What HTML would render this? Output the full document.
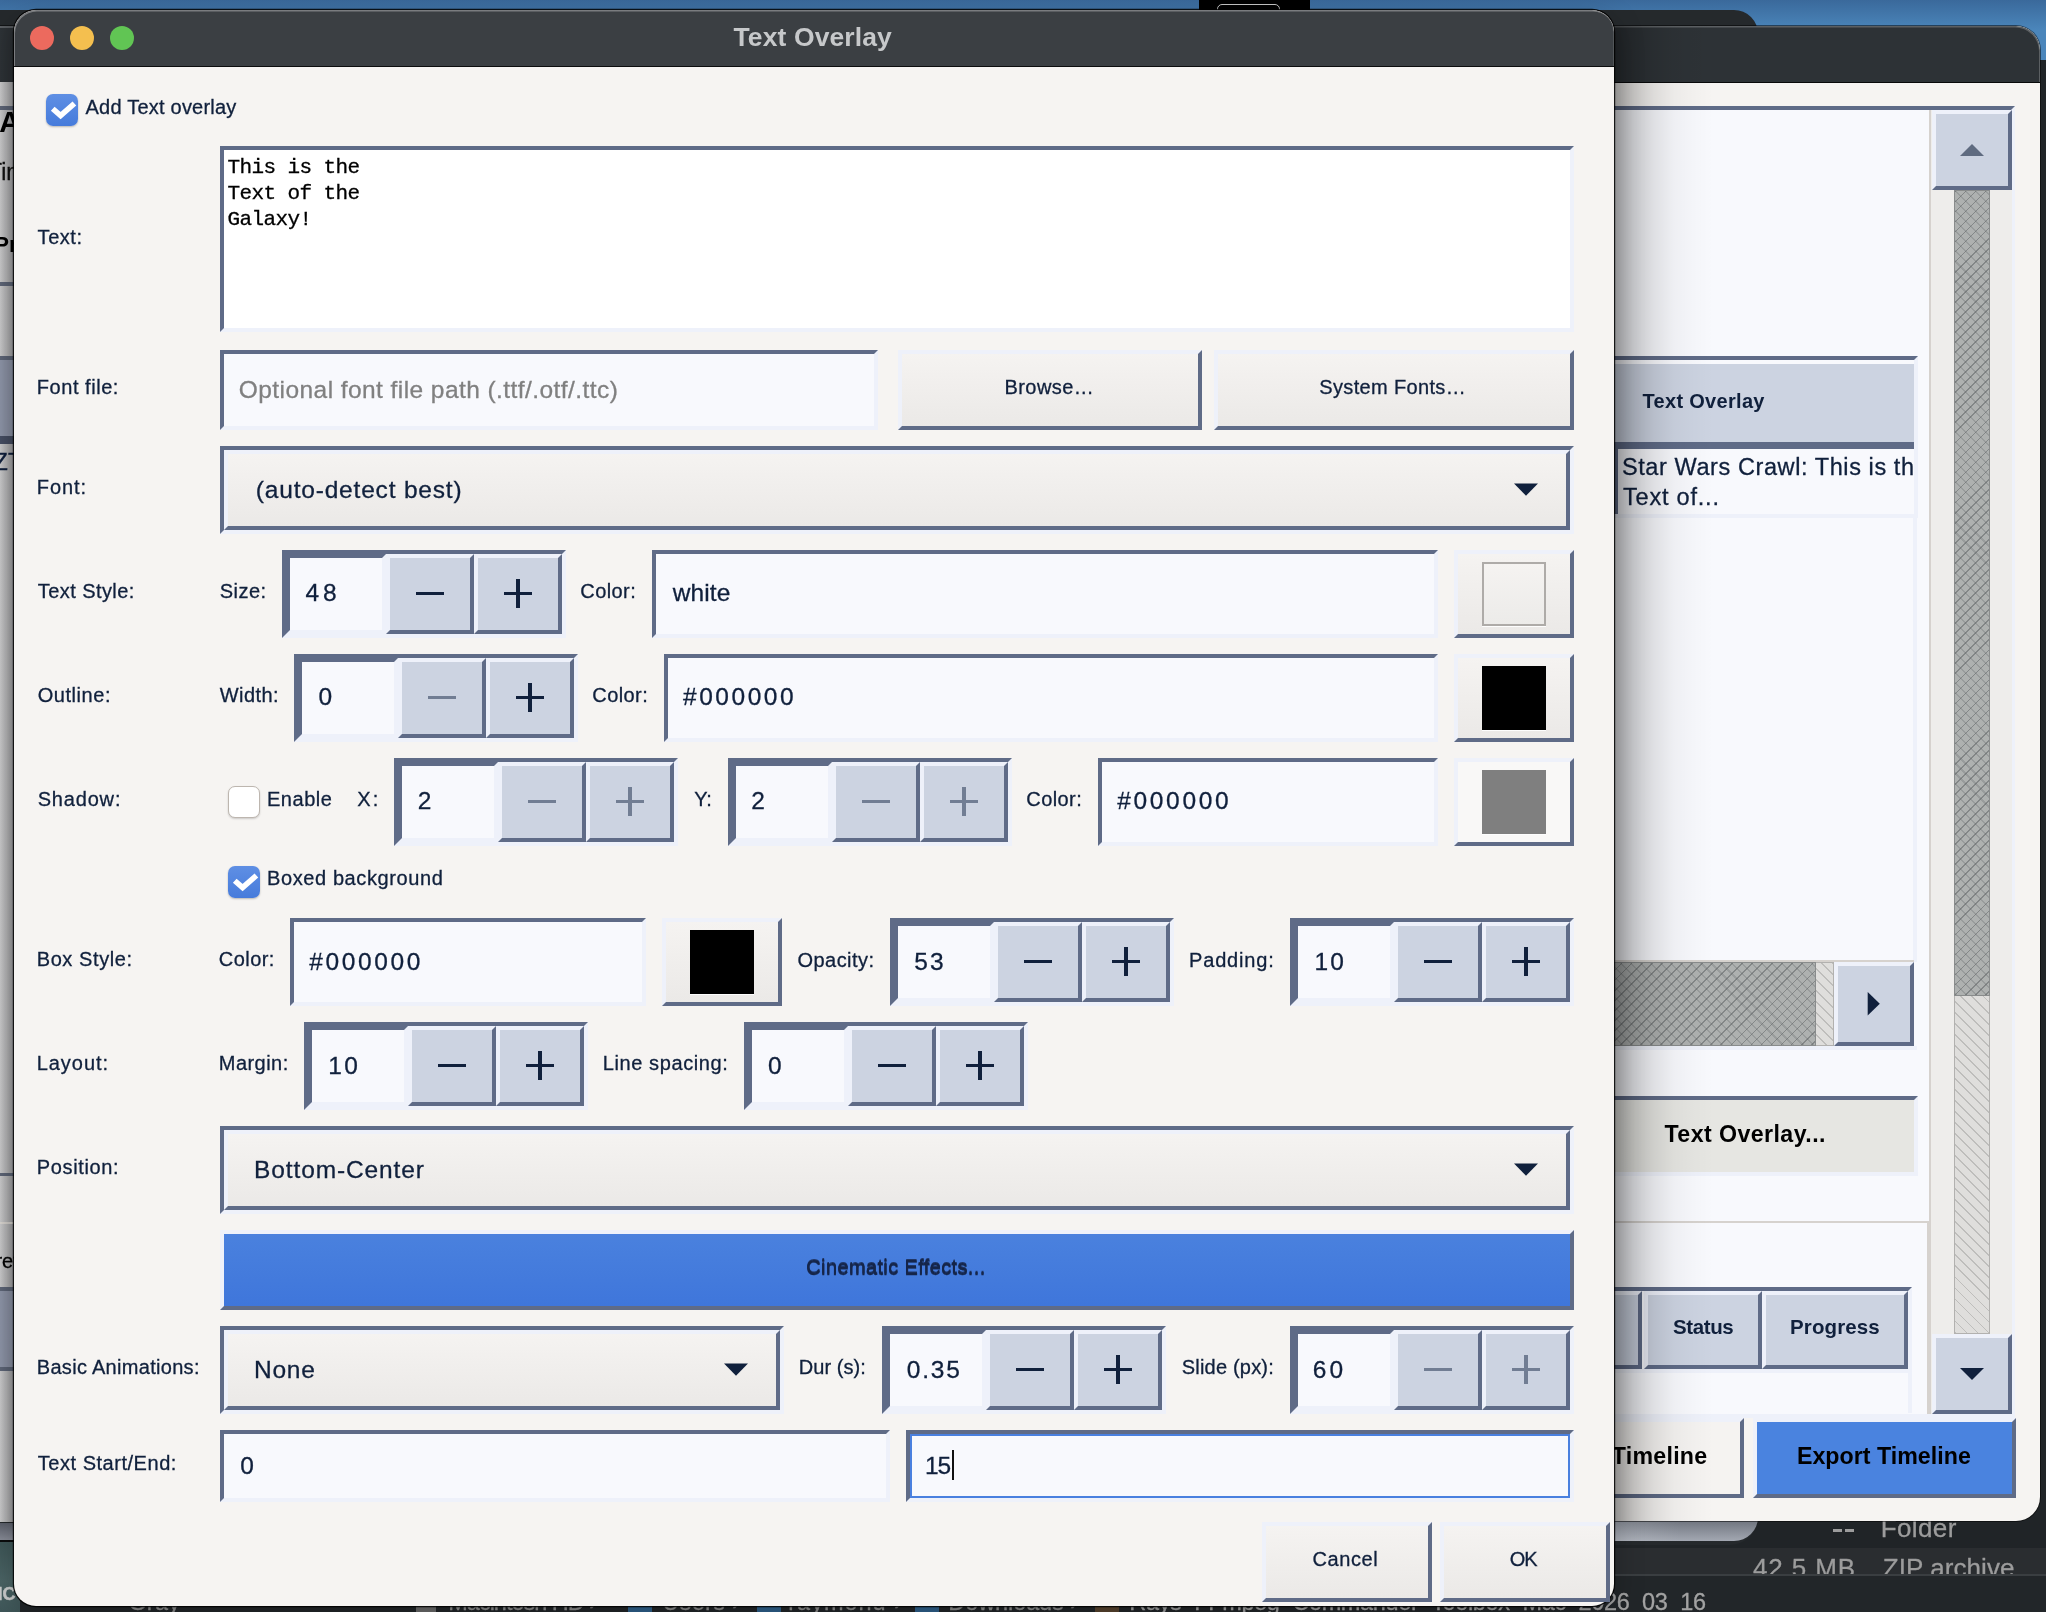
<!DOCTYPE html>
<html><head><meta charset="utf-8"><title>Text Overlay</title>
<style>
html,body{margin:0;padding:0;}
body{width:2046px;height:1612px;overflow:hidden;position:relative;background:#202427;font-family:"Liberation Sans",sans-serif;color:#10203c;}
.a,.t,.sunk,.rais{position:absolute;box-sizing:border-box;}
.t{white-space:nowrap;-webkit-text-stroke:0.3px currentColor;}
.sunk{border:4px solid;border-color:#5f6b87 #eef1fa #eef1fa #5f6b87;}
.rais{border:4px solid;border-color:#eef1fa #5f6b87 #5f6b87 #eef1fa;}
.mono{font-family:"Liberation Mono",monospace;}
#root{position:absolute;left:0;top:0;width:2046px;height:1612px;overflow:hidden;will-change:transform;}
</style></head><body><div id="root">
<div class="a" style="left:0;top:0;width:2046px;height:1612px;background:#202427"></div>
<div class="a" style="left:0;top:0;width:2046px;height:60px;background:linear-gradient(#3a699b,#4b86bb 50%,#4b86bb)"></div>
<div class="a" style="left:1199px;top:0;width:111px;height:10px;background:#000"></div>
<div class="a" style="left:1217px;top:4px;width:63px;height:12px;border:1.5px solid #c4c4c4;border-radius:5px"></div>
<div class="a" style="left:-40px;top:10px;width:1798px;height:1535px;background:#25292c;border-radius:24px 24px 28px 28px"></div>
<div class="a" style="left:1614px;top:1548px;width:432px;height:26px;background:#2a2d30;"></div>
<div class="a" style="left:1833px;top:1529px;width:9px;height:2.5px;background:#9c9c9c;"></div>
<div class="a" style="left:1845px;top:1529px;width:9px;height:2.5px;background:#9c9c9c;"></div>
<div class="t" style="left:1880.7px;top:1513.49px;font-size:26px;line-height:31px;color:#9c9c9c;letter-spacing:0.392px;">Folder</div>
<div class="t" style="left:1753.0px;top:1553.49px;font-size:26px;line-height:31px;color:#9c9c9c;letter-spacing:0.886px;">42.5 MB</div>
<div class="t" style="left:1882.7px;top:1553.49px;font-size:26px;line-height:31px;color:#9c9c9c;letter-spacing:0.077px;">ZIP archive</div>
<div class="a" style="left:0px;top:1574px;width:2046px;height:38px;background:#222629;"></div>
<div class="a" style="left:1614px;top:1574px;width:432px;height:1.5px;background:#3a3e41;"></div>
<div class="a" style="left:1500px;top:1500px;width:258px;height:40.5px;background:linear-gradient(90deg,rgba(255,255,255,.35),rgba(255,255,255,0) 70%),linear-gradient(#6f747e 50%,#a3a8b2);border-radius:0 0 24px 0"></div>
<div class="a" style="left:-60px;top:26px;width:2100px;height:1495px;background:#f6f4f2;border-radius:24px;overflow:hidden;box-shadow:0 0 0 1px rgba(0,0,0,.5)"><div class="a" style="left:0;top:0;width:2100px;height:57px;background:#2d3236;border-bottom:1px solid #08090a;border-radius:24px 24px 0 0;box-shadow:inset -1px 1.5px 0 0 rgba(255,255,255,.22)"></div></div>
<div class="sunk" style="left:1560px;top:106px;width:455px;height:1312px;background:#f8f9fd;"></div>
<div class="a" style="left:1929px;top:110px;width:2px;height:1304px;background:#d6d2ce;"></div>
<div class="a" style="left:1931px;top:110px;width:81px;height:1304px;background:#eeedeb;"></div>
<div class="rais" style="left:1932px;top:110px;width:80px;height:80px;background:#ccd3e1;"></div>
<svg class="a" style="left:1959px;top:142.8px" width="26" height="14" viewBox="0 0 26 14"><path d="M1 13 L13 1 L25 13 Z" fill="#5f6b80"/></svg>
<div class="rais" style="left:1932px;top:1334px;width:80px;height:80px;background:#ccd3e1;"></div>
<svg class="a" style="left:1959px;top:1367px" width="26" height="14" viewBox="0 0 26 14"><path d="M1 1 L25 1 L13 13 Z" fill="#10203c"/></svg>
<div class="a" style="left:1954px;top:190px;width:36px;height:1144px;background:repeating-linear-gradient(45deg,rgba(150,150,148,.45) 0 1.3px,transparent 1.3px 7.8px),#dfdedc;border:1.5px solid #b2b1af;"></div>
<div class="a" style="left:1954px;top:190px;width:36px;height:806px;background:repeating-linear-gradient(135deg,rgba(90,94,96,.5) 0 1.2px,transparent 1.2px 7.1px),repeating-linear-gradient(45deg,rgba(110,114,116,.33) 0 1.5px,transparent 1.5px 7.1px),#aeb1b0;border:1.5px solid #898c8c;"></div>
<div class="sunk" style="left:1560px;top:356px;width:358px;height:162px;background:#f8f9fd;"></div>
<div class="a" style="left:1564px;top:364px;width:350px;height:78px;background:#ccd3e1;"></div>
<div class="a" style="left:1564px;top:442px;width:350px;height:7px;background:#5f6b87;"></div>
<div class="t" style="left:1642.5px;top:389.27px;font-size:20px;line-height:24px;font-weight:bold;-webkit-text-stroke:0;letter-spacing:0.304px;">Text Overlay</div>
<div class="t" style="left:1622.0px;top:453.26px;font-size:23.5px;line-height:28px;letter-spacing:0.585px;">Star Wars Crawl: This is th</div>
<div class="t" style="left:1623.0px;top:482.96px;font-size:23.5px;line-height:28px;letter-spacing:0.791px;">Text of...</div>
<div class="a" style="left:1560px;top:518px;width:357px;height:444px;border-right:4px solid #eef1fa;"></div>
<div class="a" style="left:1560px;top:960px;width:354px;height:2px;background:#d6d2ce;"></div>
<div class="a" style="left:1560px;top:962px;width:274px;height:84px;background:repeating-linear-gradient(45deg,rgba(150,150,148,.45) 0 1.3px,transparent 1.3px 7.8px),#dfdedc;border:1.5px solid #b2b1af;"></div>
<div class="a" style="left:1560px;top:962px;width:256px;height:84px;background:repeating-linear-gradient(135deg,rgba(90,94,96,.5) 0 1.2px,transparent 1.2px 7.1px),repeating-linear-gradient(45deg,rgba(110,114,116,.33) 0 1.5px,transparent 1.5px 7.1px),#aeb1b0;border:1.5px solid #898c8c;"></div>
<div class="rais" style="left:1834px;top:962px;width:80px;height:84px;background:#ccd3e1;"></div>
<svg class="a" style="left:1866px;top:990px" width="16" height="28" viewBox="0 0 16 28"><path d="M1.7 2 L13.8 13.7 L1.7 25.4 Z" fill="#10203c"/></svg>
<div class="a" style="left:1560px;top:1046px;width:357px;height:4px;background:#eef1fa;"></div>
<div class="a" style="left:1614px;top:442px;width:4px;height:72px;background:#5f6b87;"></div>
<div class="sunk" style="left:1560px;top:1096px;width:358px;height:80px;background:#e6e6e2;"></div>
<div class="t" style="left:1664.5px;top:1120.26px;font-size:23.2px;line-height:28px;font-weight:bold;-webkit-text-stroke:0;color:#000;letter-spacing:0.418px;">Text Overlay...</div>
<div class="a" style="left:1560px;top:1221px;width:370px;height:2px;background:#d6d2ce;"></div>
<div class="a" style="left:1927px;top:1222px;width:3px;height:192px;background:#d6d2ce;"></div>
<div class="sunk" style="left:1560px;top:1287px;width:352px;height:86px;background:#f8f9fd;"></div>
<div class="rais" style="left:1560px;top:1291px;width:82px;height:78px;background:#ccd3e1;"></div>
<div class="rais" style="left:1644px;top:1291px;width:118px;height:78px;background:#ccd3e1;"></div>
<div class="t" style="left:1644px;width:118px;text-align:center;top:1318.07px;font-size:20px;line-height:24px;"></div>
<div class="t" style="left:1673.1px;top:1314.40px;font-size:20.5px;line-height:25px;font-weight:bold;-webkit-text-stroke:0;letter-spacing:-0.41px;">Status</div>
<div class="rais" style="left:1762px;top:1291px;width:146px;height:78px;background:#ccd3e1;"></div>
<div class="t" style="left:1762px;width:146px;text-align:center;top:1318.07px;font-size:20px;line-height:24px;"></div>
<div class="t" style="left:1790.1px;top:1314.40px;font-size:20.5px;line-height:25px;font-weight:bold;-webkit-text-stroke:0;letter-spacing:0.089px;">Progress</div>
<div class="a" style="left:1560px;top:1373px;width:352px;height:40px;border-right:4px solid #eef1fa;"></div>
<div class="rais" style="left:1560px;top:1418px;width:184px;height:80px;background:#f5f3f1;"></div>
<div class="t" style="left:1560px;width:184px;text-align:center;top:1446.07px;font-size:20px;line-height:24px;"></div>
<div class="t" style="right:338.6px;top:1442.3px;font-size:23.2px;line-height:28px;font-weight:bold;-webkit-text-stroke:0;color:#000;letter-spacing:0.25px">Timeline</div>
<div class="rais" style="left:1753px;top:1418px;width:263px;height:80px;background:#4a83df;"></div>
<div class="t" style="left:1753px;width:263px;text-align:center;top:1446.07px;font-size:20px;line-height:24px;"></div>
<div class="t" style="left:1796.9px;top:1441.96px;font-size:23.2px;line-height:28px;font-weight:bold;-webkit-text-stroke:0;color:#000;letter-spacing:0.027px;">Export Timeline</div>
<div class="a" style="left:1614px;top:26px;width:100px;height:1495px;background:linear-gradient(90deg,rgba(0,0,0,.34),rgba(0,0,0,.20) 20%,rgba(0,0,0,.10) 40%,rgba(0,0,0,.04) 60%,rgba(0,0,0,.015) 80%,rgba(0,0,0,0) 100%);"></div>
<div class="a" style="left:0px;top:82px;width:14px;height:1440px;background:linear-gradient(90deg,#c9c9ca,#b6b6b8 55%,#a0a0a3);"></div>
<div class="a" style="left:0px;top:106px;width:14px;height:4px;background:#5d6577;"></div>
<div class="a" style="left:0px;top:282px;width:14px;height:4px;background:#5d6577;"></div>
<div class="a" style="left:0px;top:356px;width:14px;height:4px;background:#5d6577;"></div>
<div class="a" style="left:0px;top:360px;width:14px;height:76px;background:#8d94a7;"></div>
<div class="a" style="left:0px;top:436px;width:14px;height:8px;background:#464e63;"></div>
<div class="a" style="left:0px;top:1173px;width:14px;height:3px;background:#5d6577;"></div>
<div class="a" style="left:0px;top:1222px;width:14px;height:2px;background:#d9d5d0;"></div>
<div class="a" style="left:0px;top:1287px;width:14px;height:4px;background:#5d6577;"></div>
<div class="a" style="left:0px;top:1291px;width:14px;height:76px;background:#8d94a7;"></div>
<div class="a" style="left:0px;top:1367px;width:14px;height:4px;background:#5d6577;"></div>
<div class="a" style="left:0px;top:26px;width:14px;height:1.5px;background:#5b5f63;"></div>
<div class="t" style="left:-0.8px;top:105.15px;font-size:29px;line-height:35px;font-weight:bold;-webkit-text-stroke:0;color:#000;">Add</div>
<div class="t" style="left:-12px;top:157.73px;font-size:23px;line-height:28px;color:#111;">Timeline</div>
<div class="t" style="left:-6px;top:230.70px;font-size:22.5px;line-height:27px;font-weight:bold;-webkit-text-stroke:0;color:#000;">Project</div>
<div class="t" style="left:-6.4px;top:447.66px;font-size:23.5px;line-height:28px;color:#10203c;">ZT</div>
<div class="t" style="left:-4.6px;top:1249.37px;font-size:20px;line-height:24px;color:#000;">rev</div>
<div class="a" style="left:0px;top:26px;width:14px;height:1500px;background:linear-gradient(90deg,rgba(0,0,0,0),rgba(0,0,0,.12));"></div>
<div class="a" style="left:0px;top:1523px;width:14px;height:18px;background:linear-gradient(#5a5e69,#8a8e99);"></div>
<div class="a" style="left:0px;top:1540px;width:20px;height:1.5px;background:#0b0c0d;"></div>
<div class="a" style="left:0px;top:1541.5px;width:19.5px;height:71px;background:linear-gradient(180deg,#3d5556,#4b6465 55%,#3f5759);"></div>
<div class="t" style="left:-2.6px;top:1583.26px;font-size:18px;line-height:22px;font-weight:bold;-webkit-text-stroke:0;color:#c9cbcb;-webkit-text-stroke:0.5px #c9cbcb;">IC</div>
<div class="t" style="left:128.3px;top:1587.66px;font-size:23.5px;line-height:28px;color:#8e8e8e;letter-spacing:0.242px;">Gray</div>
<div class="a" style="left:416px;top:1598px;width:20px;height:14px;background:#6b6b6b;"></div>
<div class="t" style="left:448.3px;top:1587.66px;font-size:23.5px;line-height:28px;color:#8e8e8e;letter-spacing:-1.016px;">Macintosh HD ›</div>
<div class="a" style="left:628px;top:1598px;width:24px;height:14px;background:#2f618d;"></div>
<div class="t" style="left:662.3px;top:1587.66px;font-size:23.5px;line-height:28px;color:#8e8e8e;letter-spacing:0.334px;">Users ›</div>
<div class="a" style="left:757px;top:1598px;width:24px;height:14px;background:#2f618d;"></div>
<div class="t" style="left:788.3px;top:1587.66px;font-size:23.5px;line-height:28px;color:#8e8e8e;letter-spacing:0.993px;">raymond ›</div>
<div class="a" style="left:915px;top:1598px;width:24px;height:14px;background:#2f618d;"></div>
<div class="t" style="left:948.3px;top:1587.66px;font-size:23.5px;line-height:28px;color:#8e8e8e;letter-spacing:-0.089px;">Downloads ›</div>
<div class="a" style="left:1095px;top:1598px;width:24px;height:14px;background:#59442f;"></div>
<div class="t" style="left:1129.3px;top:1587.66px;font-size:23.5px;line-height:28px;color:#a2a2a2;letter-spacing:-0.349px;">Rays_FFmpeg_Commander_Toolbox_Mac_2026_03_16</div>
<div class="a" style="left:14px;top:10px;width:1600px;height:1596px;background:#f6f4f2;border-radius:22px;box-shadow:0 0 0 1.2px rgba(0,0,0,.85),0 10px 30px rgba(0,0,0,.25);overflow:hidden"><div class="a" style="left:0;top:0;width:1600px;height:57px;background:#3b3f43;border-bottom:1px solid #0c0d0e;border-radius:22px 22px 0 0;box-shadow:inset 1px 1.5px 0 0 rgba(255,255,255,.32),inset -1px 0 0 0 rgba(255,255,255,.12)"></div></div>
<div class="a" style="left:30px;top:26px;width:24px;height:24px;border-radius:50%;background:#ec6a5e;"></div>
<div class="a" style="left:70px;top:26px;width:24px;height:24px;border-radius:50%;background:#f4bf4f;"></div>
<div class="a" style="left:110px;top:26px;width:24px;height:24px;border-radius:50%;background:#61c554;"></div>
<div class="t" style="left:733.5px;top:21.02px;font-size:26.5px;line-height:32px;font-weight:bold;-webkit-text-stroke:0;color:#c6c8ca;letter-spacing:0.11px;">Text Overlay</div>
<div class="a" style="left:46px;top:94px;width:32px;height:32px;border-radius:7px;background:linear-gradient(#5f8fe4,#467bdb);box-shadow:0 1px 2px rgba(0,0,0,.25);"></div>
<svg class="a" style="left:46px;top:94px" width="32" height="32" viewBox="0 0 32 32"><path d="M6.75 14.75 L14.6 21.6 L28.4 9.5" fill="none" stroke="#fff" stroke-width="5.6" stroke-linejoin="miter"/></svg>
<div class="t" style="left:85.55px;top:94.82px;font-size:20px;line-height:24px;letter-spacing:0.22px;">Add Text overlay</div>
<div class="t" style="left:37.6px;top:225.07px;font-size:20px;line-height:24px;letter-spacing:0.543px;">Text:</div>
<div class="sunk" style="left:220px;top:146px;width:1354px;height:186px;background:#fff;"></div>
<div class="t mono" style="left:227.6px;top:155.25px;font-size:21px;line-height:26px;letter-spacing:-0.6px;color:#000">This is the</div>
<div class="t mono" style="left:227.6px;top:181.25px;font-size:21px;line-height:26px;letter-spacing:-0.6px;color:#000">Text of the</div>
<div class="t mono" style="left:227.6px;top:207.25px;font-size:21px;line-height:26px;letter-spacing:-0.6px;color:#000">Galaxy!</div>
<div class="t" style="left:36.8px;top:375.07px;font-size:20px;line-height:24px;letter-spacing:0.54px;">Font file:</div>
<div class="sunk" style="left:220px;top:350px;width:658px;height:80px;background:#f8f9fd;"></div>
<div class="t" style="left:238.8px;top:375.26px;font-size:24.5px;line-height:29px;color:#808080;letter-spacing:0.432px;">Optional font file path (.ttf/.otf/.ttc)</div>
<div class="rais" style="left:898px;top:350px;width:304px;height:80px;background:linear-gradient(#f5f3f1,#ebe9e7);"></div>
<div class="t" style="left:898px;width:304px;text-align:center;top:378.07px;font-size:20px;line-height:24px;"></div>
<div class="t" style="left:1004.55px;top:374.82px;font-size:20px;line-height:24px;letter-spacing:0.41px;">Browse…</div>
<div class="rais" style="left:1214px;top:350px;width:360px;height:80px;background:linear-gradient(#f5f3f1,#ebe9e7);"></div>
<div class="t" style="left:1214px;width:360px;text-align:center;top:378.07px;font-size:20px;line-height:24px;"></div>
<div class="t" style="left:1319.3px;top:374.82px;font-size:20px;line-height:24px;letter-spacing:0.345px;">System Fonts…</div>
<div class="t" style="left:36.8px;top:475.07px;font-size:20px;line-height:24px;letter-spacing:0.945px;">Font:</div>
<div class="sunk" style="left:220px;top:446px;width:1354px;height:88px;"></div>
<div class="rais" style="left:224px;top:450px;width:1346px;height:80px;background:linear-gradient(#f5f3f1,#ebe9e7);"></div>
<svg class="a" style="left:1513px;top:483.3px" width="26" height="14" viewBox="0 0 26 14"><path d="M1 0.5 L25 0.5 L13 12.8 Z" fill="#10203c"/></svg>
<div class="t" style="left:255.8px;top:475.01px;font-size:24.5px;line-height:29px;letter-spacing:0.811px;">(auto-detect best)</div>
<div class="t" style="left:37.8px;top:579.07px;font-size:20px;line-height:24px;letter-spacing:0.43px;">Text Style:</div>
<div class="t" style="left:219.7px;top:579.07px;font-size:20px;line-height:24px;letter-spacing:0.498px;">Size:</div>
<div class="sunk" style="left:282px;top:550px;width:284px;height:88px;"></div>
<div class="sunk" style="left:286px;top:554px;width:100px;height:80px;background:#f8f9fd;"></div>
<div class="rais" style="left:386px;top:554px;width:88px;height:80px;background:#ccd3e1;"></div>
<div class="rais" style="left:474px;top:554px;width:88px;height:80px;background:#ccd3e1;"></div>
<div class="a" style="left:416px;top:591.5px;width:28px;height:3.5px;background:#10203c;"></div>
<div class="a" style="left:503.5px;top:591.5px;width:28.5px;height:3.5px;background:#10203c;"></div>
<div class="a" style="left:516.0px;top:579.0px;width:3.5px;height:28.5px;background:#10203c;"></div>
<div class="t" style="left:305.55px;top:578.26px;font-size:24.5px;line-height:29px;letter-spacing:3.774px;">48</div>
<div class="t" style="left:580.3px;top:579.07px;font-size:20px;line-height:24px;letter-spacing:0.421px;">Color:</div>
<div class="sunk" style="left:652px;top:550px;width:786px;height:88px;background:#f8f9fd;"></div>
<div class="t" style="left:672.8px;top:578.26px;font-size:24.5px;line-height:29px;letter-spacing:0.083px;">white</div>
<div class="rais" style="left:1454px;top:550px;width:120px;height:88px;background:linear-gradient(#f5f3f1,#ebe9e7);"></div>
<div class="a" style="left:1482px;top:562px;width:64px;height:64px;background:linear-gradient(#f5f3f1,#ecebe9);box-sizing:border-box;border:2px solid #aeaba8;"></div>
<div class="a" style="left:1482px;top:626px;width:64px;height:1.3px;background:#fdfdfd;"></div>
<div class="t" style="left:37.7px;top:683.37px;font-size:20px;line-height:24px;letter-spacing:0.562px;">Outline:</div>
<div class="t" style="left:219.8px;top:683.37px;font-size:20px;line-height:24px;letter-spacing:0.395px;">Width:</div>
<div class="sunk" style="left:294px;top:654px;width:284px;height:88px;"></div>
<div class="sunk" style="left:298px;top:658px;width:100px;height:80px;background:#f8f9fd;"></div>
<div class="rais" style="left:398px;top:658px;width:88px;height:80px;background:#ccd3e1;"></div>
<div class="rais" style="left:486px;top:658px;width:88px;height:80px;background:#ccd3e1;"></div>
<div class="a" style="left:428px;top:695.5px;width:28px;height:3.5px;background:#717d93;"></div>
<div class="a" style="left:515.5px;top:695.5px;width:28.5px;height:3.5px;background:#10203c;"></div>
<div class="a" style="left:528.0px;top:683.0px;width:3.5px;height:28.5px;background:#10203c;"></div>
<div class="t" style="left:318.55px;top:682.26px;font-size:24.5px;line-height:29px;letter-spacing:0px;">0</div>
<div class="t" style="left:592.3px;top:683.37px;font-size:20px;line-height:24px;letter-spacing:0.421px;">Color:</div>
<div class="sunk" style="left:664px;top:654px;width:774px;height:88px;background:#f8f9fd;"></div>
<div class="t" style="left:683.05px;top:682.26px;font-size:24.5px;line-height:29px;letter-spacing:2.524px;">#000000</div>
<div class="rais" style="left:1454px;top:654px;width:120px;height:88px;background:linear-gradient(#f5f3f1,#ebe9e7);"></div>
<div class="a" style="left:1482px;top:666px;width:64px;height:64px;background:#000;"></div>
<div class="a" style="left:1482px;top:730px;width:64px;height:1.3px;background:#fdfdfd;"></div>
<div class="t" style="left:37.7px;top:786.87px;font-size:20px;line-height:24px;letter-spacing:0.821px;">Shadow:</div>
<div class="a" style="left:228px;top:786px;width:32px;height:32px;border-radius:7px;background:#fff;box-sizing:border-box;border:1.5px solid #bdb6af;box-shadow:0 1px 2px rgba(0,0,0,.18);"></div>
<div class="t" style="left:267.0px;top:786.87px;font-size:20px;line-height:24px;letter-spacing:0.53px;">Enable</div>
<div class="t" style="left:357.3px;top:786.87px;font-size:20px;line-height:24px;letter-spacing:2.16px;">X:</div>
<div class="sunk" style="left:394px;top:758px;width:284px;height:88px;"></div>
<div class="sunk" style="left:398px;top:762px;width:100px;height:80px;background:#f8f9fd;"></div>
<div class="rais" style="left:498px;top:762px;width:88px;height:80px;background:#ccd3e1;"></div>
<div class="rais" style="left:586px;top:762px;width:88px;height:80px;background:#ccd3e1;"></div>
<div class="a" style="left:528px;top:799.5px;width:28px;height:3.5px;background:#717d93;"></div>
<div class="a" style="left:615.5px;top:799.5px;width:28.5px;height:3.5px;background:#717d93;"></div>
<div class="a" style="left:628.0px;top:787.0px;width:3.5px;height:28.5px;background:#717d93;"></div>
<div class="t" style="left:417.8px;top:786.26px;font-size:24.5px;line-height:29px;letter-spacing:0px;">2</div>
<div class="t" style="left:694.3px;top:786.87px;font-size:20px;line-height:24px;letter-spacing:-0.336px;">Y:</div>
<div class="sunk" style="left:728px;top:758px;width:284px;height:88px;"></div>
<div class="sunk" style="left:732px;top:762px;width:100px;height:80px;background:#f8f9fd;"></div>
<div class="rais" style="left:832px;top:762px;width:88px;height:80px;background:#ccd3e1;"></div>
<div class="rais" style="left:920px;top:762px;width:88px;height:80px;background:#ccd3e1;"></div>
<div class="a" style="left:862px;top:799.5px;width:28px;height:3.5px;background:#717d93;"></div>
<div class="a" style="left:949.5px;top:799.5px;width:28.5px;height:3.5px;background:#717d93;"></div>
<div class="a" style="left:962.0px;top:787.0px;width:3.5px;height:28.5px;background:#717d93;"></div>
<div class="t" style="left:751.3px;top:786.26px;font-size:24.5px;line-height:29px;letter-spacing:0px;">2</div>
<div class="t" style="left:1026.3px;top:786.87px;font-size:20px;line-height:24px;letter-spacing:0.421px;">Color:</div>
<div class="sunk" style="left:1098px;top:758px;width:340px;height:88px;background:#f8f9fd;"></div>
<div class="t" style="left:1117.3px;top:786.26px;font-size:24.5px;line-height:29px;letter-spacing:2.649px;">#000000</div>
<div class="rais" style="left:1454px;top:758px;width:120px;height:88px;background:#f9f8f7;"></div>
<div class="a" style="left:1482px;top:770px;width:64px;height:64px;background:#7f7f7f;"></div>
<div class="a" style="left:1482px;top:834px;width:64px;height:1.3px;background:#fdfdfd;"></div>
<div class="a" style="left:228px;top:866px;width:32px;height:32px;border-radius:7px;background:linear-gradient(#5f8fe4,#467bdb);box-shadow:0 1px 2px rgba(0,0,0,.25);"></div>
<svg class="a" style="left:228px;top:866px" width="32" height="32" viewBox="0 0 32 32"><path d="M6.75 14.75 L14.6 21.6 L28.4 9.5" fill="none" stroke="#fff" stroke-width="5.6" stroke-linejoin="miter"/></svg>
<div class="t" style="left:267.0px;top:866.37px;font-size:20px;line-height:24px;letter-spacing:0.602px;">Boxed background</div>
<div class="t" style="left:36.7px;top:947.07px;font-size:20px;line-height:24px;letter-spacing:0.602px;">Box Style:</div>
<div class="t" style="left:218.8px;top:947.07px;font-size:20px;line-height:24px;letter-spacing:0.441px;">Color:</div>
<div class="sunk" style="left:290px;top:918px;width:356px;height:88px;background:#f8f9fd;"></div>
<div class="t" style="left:309.3px;top:946.51px;font-size:24.5px;line-height:29px;letter-spacing:2.608px;">#000000</div>
<div class="rais" style="left:662px;top:918px;width:120px;height:88px;background:linear-gradient(#f5f3f1,#ebe9e7);"></div>
<div class="a" style="left:690px;top:930px;width:64px;height:64px;background:#000;"></div>
<div class="a" style="left:690px;top:994px;width:64px;height:1.3px;background:#fdfdfd;"></div>
<div class="t" style="left:797.55px;top:947.57px;font-size:20px;line-height:24px;letter-spacing:0.442px;">Opacity:</div>
<div class="sunk" style="left:890px;top:918px;width:284px;height:88px;"></div>
<div class="sunk" style="left:894px;top:922px;width:100px;height:80px;background:#f8f9fd;"></div>
<div class="rais" style="left:994px;top:922px;width:88px;height:80px;background:#ccd3e1;"></div>
<div class="rais" style="left:1082px;top:922px;width:88px;height:80px;background:#ccd3e1;"></div>
<div class="a" style="left:1024px;top:959.5px;width:28px;height:3.5px;background:#10203c;"></div>
<div class="a" style="left:1111.5px;top:959.5px;width:28.5px;height:3.5px;background:#10203c;"></div>
<div class="a" style="left:1124.0px;top:947.0px;width:3.5px;height:28.5px;background:#10203c;"></div>
<div class="t" style="left:914.3px;top:946.51px;font-size:24.5px;line-height:29px;letter-spacing:2.024px;">53</div>
<div class="t" style="left:1189.05px;top:947.57px;font-size:20px;line-height:24px;letter-spacing:0.822px;">Padding:</div>
<div class="sunk" style="left:1290px;top:918px;width:284px;height:88px;"></div>
<div class="sunk" style="left:1294px;top:922px;width:100px;height:80px;background:#f8f9fd;"></div>
<div class="rais" style="left:1394px;top:922px;width:88px;height:80px;background:#ccd3e1;"></div>
<div class="rais" style="left:1482px;top:922px;width:88px;height:80px;background:#ccd3e1;"></div>
<div class="a" style="left:1424px;top:959.5px;width:28px;height:3.5px;background:#10203c;"></div>
<div class="a" style="left:1511.5px;top:959.5px;width:28.5px;height:3.5px;background:#10203c;"></div>
<div class="a" style="left:1524.0px;top:947.0px;width:3.5px;height:28.5px;background:#10203c;"></div>
<div class="t" style="left:1314.5px;top:946.51px;font-size:24.5px;line-height:29px;letter-spacing:2.074px;">10</div>
<div class="t" style="left:36.7px;top:1051.07px;font-size:20px;line-height:24px;letter-spacing:0.959px;">Layout:</div>
<div class="t" style="left:218.8px;top:1051.07px;font-size:20px;line-height:24px;letter-spacing:0.461px;">Margin:</div>
<div class="sunk" style="left:304px;top:1022px;width:284px;height:88px;"></div>
<div class="sunk" style="left:308px;top:1026px;width:100px;height:80px;background:#f8f9fd;"></div>
<div class="rais" style="left:408px;top:1026px;width:88px;height:80px;background:#ccd3e1;"></div>
<div class="rais" style="left:496px;top:1026px;width:88px;height:80px;background:#ccd3e1;"></div>
<div class="a" style="left:438px;top:1063.5px;width:28px;height:3.5px;background:#10203c;"></div>
<div class="a" style="left:525.5px;top:1063.5px;width:28.5px;height:3.5px;background:#10203c;"></div>
<div class="a" style="left:538.0px;top:1051.0px;width:3.5px;height:28.5px;background:#10203c;"></div>
<div class="t" style="left:328.3px;top:1050.51px;font-size:24.5px;line-height:29px;letter-spacing:2.274px;">10</div>
<div class="t" style="left:602.8px;top:1051.07px;font-size:20px;line-height:24px;letter-spacing:0.591px;">Line spacing:</div>
<div class="sunk" style="left:744px;top:1022px;width:284px;height:88px;"></div>
<div class="sunk" style="left:748px;top:1026px;width:100px;height:80px;background:#f8f9fd;"></div>
<div class="rais" style="left:848px;top:1026px;width:88px;height:80px;background:#ccd3e1;"></div>
<div class="rais" style="left:936px;top:1026px;width:88px;height:80px;background:#ccd3e1;"></div>
<div class="a" style="left:878px;top:1063.5px;width:28px;height:3.5px;background:#10203c;"></div>
<div class="a" style="left:965.5px;top:1063.5px;width:28.5px;height:3.5px;background:#10203c;"></div>
<div class="a" style="left:978.0px;top:1051.0px;width:3.5px;height:28.5px;background:#10203c;"></div>
<div class="t" style="left:768.05px;top:1050.51px;font-size:24.5px;line-height:29px;letter-spacing:0px;">0</div>
<div class="t" style="left:36.8px;top:1155.07px;font-size:20px;line-height:24px;letter-spacing:0.631px;">Position:</div>
<div class="sunk" style="left:220px;top:1126px;width:1354px;height:88px;"></div>
<div class="rais" style="left:224px;top:1130px;width:1346px;height:80px;background:linear-gradient(#f5f3f1,#ebe9e7);"></div>
<svg class="a" style="left:1513px;top:1163.3px" width="26" height="14" viewBox="0 0 26 14"><path d="M1 0.5 L25 0.5 L13 12.8 Z" fill="#10203c"/></svg>
<div class="t" style="left:254.05px;top:1154.51px;font-size:24.5px;line-height:29px;letter-spacing:0.875px;">Bottom-Center</div>
<div class="rais" style="left:220px;top:1230px;width:1354px;height:80px;background:linear-gradient(#4a81de,#3f76db);"></div>
<div class="t" style="left:806.3px;top:1255.87px;font-size:20px;line-height:24px;color:#16264a;letter-spacing:0.371px;text-shadow:0 -1.7px 0 rgba(22,38,74,.8),0 -0.85px 0 #16264a;">Cinematic Effects...</div>
<div class="t" style="left:36.8px;top:1355.17px;font-size:20px;line-height:24px;letter-spacing:0.3px;">Basic Animations:</div>
<div class="sunk" style="left:220px;top:1326px;width:564px;height:88px;"></div>
<div class="rais" style="left:224px;top:1330px;width:556px;height:80px;background:linear-gradient(#f5f3f1,#ebe9e7);"></div>
<svg class="a" style="left:723px;top:1363.3px" width="26" height="14" viewBox="0 0 26 14"><path d="M1 0.5 L25 0.5 L13 12.8 Z" fill="#10203c"/></svg>
<div class="t" style="left:254.05px;top:1354.51px;font-size:24.5px;line-height:29px;letter-spacing:0.735px;">None</div>
<div class="t" style="left:798.8px;top:1355.17px;font-size:20px;line-height:24px;letter-spacing:0.042px;">Dur (s):</div>
<div class="sunk" style="left:882px;top:1326px;width:284px;height:88px;"></div>
<div class="sunk" style="left:886px;top:1330px;width:100px;height:80px;background:#f8f9fd;"></div>
<div class="rais" style="left:986px;top:1330px;width:88px;height:80px;background:#ccd3e1;"></div>
<div class="rais" style="left:1074px;top:1330px;width:88px;height:80px;background:#ccd3e1;"></div>
<div class="a" style="left:1016px;top:1367.5px;width:28px;height:3.5px;background:#10203c;"></div>
<div class="a" style="left:1103.5px;top:1367.5px;width:28.5px;height:3.5px;background:#10203c;"></div>
<div class="a" style="left:1116.0px;top:1355.0px;width:3.5px;height:28.5px;background:#10203c;"></div>
<div class="t" style="left:906.8px;top:1354.51px;font-size:24.5px;line-height:29px;letter-spacing:1.781px;">0.35</div>
<div class="t" style="left:1181.8px;top:1355.17px;font-size:20px;line-height:24px;letter-spacing:0.193px;">Slide (px):</div>
<div class="sunk" style="left:1290px;top:1326px;width:284px;height:88px;"></div>
<div class="sunk" style="left:1294px;top:1330px;width:100px;height:80px;background:#f8f9fd;"></div>
<div class="rais" style="left:1394px;top:1330px;width:88px;height:80px;background:#ccd3e1;"></div>
<div class="rais" style="left:1482px;top:1330px;width:88px;height:80px;background:#ccd3e1;"></div>
<div class="a" style="left:1424px;top:1367.5px;width:28px;height:3.5px;background:#717d93;"></div>
<div class="a" style="left:1511.5px;top:1367.5px;width:28.5px;height:3.5px;background:#717d93;"></div>
<div class="a" style="left:1524.0px;top:1355.0px;width:3.5px;height:28.5px;background:#717d93;"></div>
<div class="t" style="left:1312.8px;top:1354.51px;font-size:24.5px;line-height:29px;letter-spacing:3.024px;">60</div>
<div class="t" style="left:37.8px;top:1451.07px;font-size:20px;line-height:24px;letter-spacing:0.527px;">Text Start/End:</div>
<div class="sunk" style="left:220px;top:1430px;width:670px;height:72px;background:#f8f9fd;"></div>
<div class="t" style="left:240.3px;top:1450.51px;font-size:24.5px;line-height:29px;letter-spacing:0px;">0</div>
<div class="sunk" style="left:906px;top:1430px;width:668px;height:72px;background:#f8f9fd;"></div>
<div class="a" style="left:910px;top:1434px;width:660px;height:64px;border:2px solid #4a80df;box-sizing:border-box;"></div>
<div class="t" style="left:925.1px;top:1450.51px;font-size:24.5px;line-height:29px;letter-spacing:-1.226px;">15</div>
<div class="a" style="left:952px;top:1450px;width:2px;height:30px;background:#111;"></div>
<div class="rais" style="left:1262px;top:1522px;width:170px;height:80px;background:linear-gradient(#f5f3f1,#ebe9e7);"></div>
<div class="t" style="left:1262px;width:170px;text-align:center;top:1550.07px;font-size:20px;line-height:24px;"></div>
<div class="t" style="left:1312.5px;top:1547.07px;font-size:20px;line-height:24px;letter-spacing:0.577px;">Cancel</div>
<div class="rais" style="left:1440px;top:1522px;width:170px;height:80px;background:linear-gradient(#f5f3f1,#ebe9e7);"></div>
<div class="t" style="left:1440px;width:170px;text-align:center;top:1550.07px;font-size:20px;line-height:24px;"></div>
<div class="t" style="left:1509.8px;top:1547.07px;font-size:20px;line-height:24px;letter-spacing:-1.157px;">OK</div>
</div></body></html>
